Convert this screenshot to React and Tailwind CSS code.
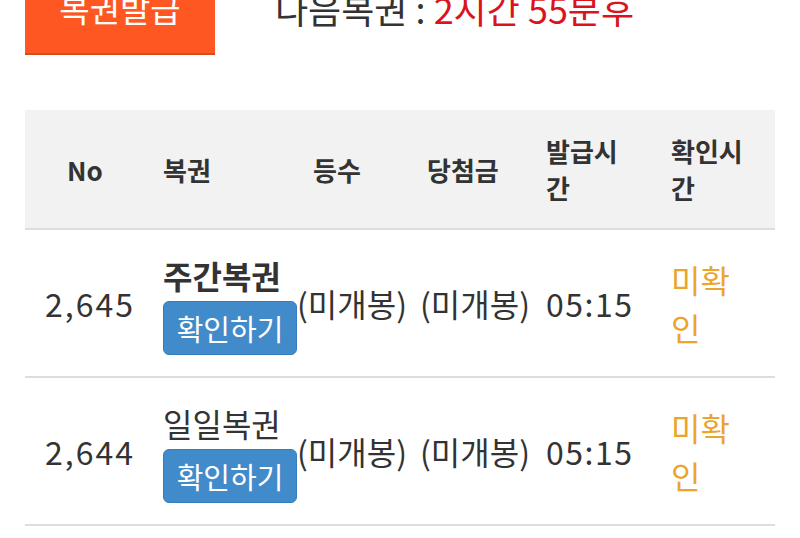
import React from 'react';

const ROWS = [
  { no: '2,645', name: '주간복권', bold: true, rank: '(미개봉)', prize: '(미개봉)', issued: '05:15' },
  { no: '2,644', name: '일일복권', bold: false, rank: '(미개봉)', prize: '(미개봉)', issued: '05:15' },
];

const COLS = 'grid grid-cols-[138px_134px_123px_126px_125px_104px]';

export default function App() {
  return (
    <div className="w-[800px] h-[538px] overflow-hidden bg-white text-[#333] px-[25px] font-['Noto_Sans_CJK_KR','Noto_Sans',sans-serif]">
      {/* top bar */}
      <div className="flex items-center gap-[60px] mt-[-36px]">
        <button className="w-[190px] h-[91px] bg-[#ff5722] border-b-2 border-[#d84a1f] text-white text-[33px]">
          복권발급
        </button>
        <div className="text-[36px] text-[#333] leading-none mt-[-4px]">
          다음복권 : <span className="text-[#d9141c]">2시간 55분후</span>
        </div>
      </div>

      {/* table */}
      <div className="mt-[55px] w-[750px]">
        <div className={`${COLS} h-[120px] bg-[#f2f2f2] border-b-2 border-[#ddd] items-center text-[26px] font-bold leading-[37px]`}>
          <div className="pl-[42px]">No</div>
          <div>복권</div>
          <div className="pl-[16px]">등수</div>
          <div className="pl-[7px]">당첨금</div>
          <div>발급시<br />간</div>
          <div>확인시<br />간</div>
        </div>
        {ROWS.map((r) => (
          <div key={r.no} className={`${COLS} items-center py-[21px] border-b-2 border-[#ddd] text-[32px] leading-[48px]`}>
            <div className="pl-[20px] tracking-[2px]">{r.no}</div>
            <div className="flex flex-col items-start">
              <div className={`whitespace-nowrap ${r.bold ? 'font-bold' : ''}`}>{r.name}</div>
              <button className="mt-[2px] w-[134px] h-[54px] rounded-[6px] bg-[#428bca] border border-[#357ebd] text-white text-[29px] leading-none">
                확인하기
              </button>
            </div>
            <div className="whitespace-nowrap">{r.rank}</div>
            <div className="whitespace-nowrap">{r.prize}</div>
            <div className="tracking-[1.5px]">{r.issued}</div>
            <div className="text-[#eba52a]">미확<br />인</div>
          </div>
        ))}
      </div>
    </div>
  );
}
